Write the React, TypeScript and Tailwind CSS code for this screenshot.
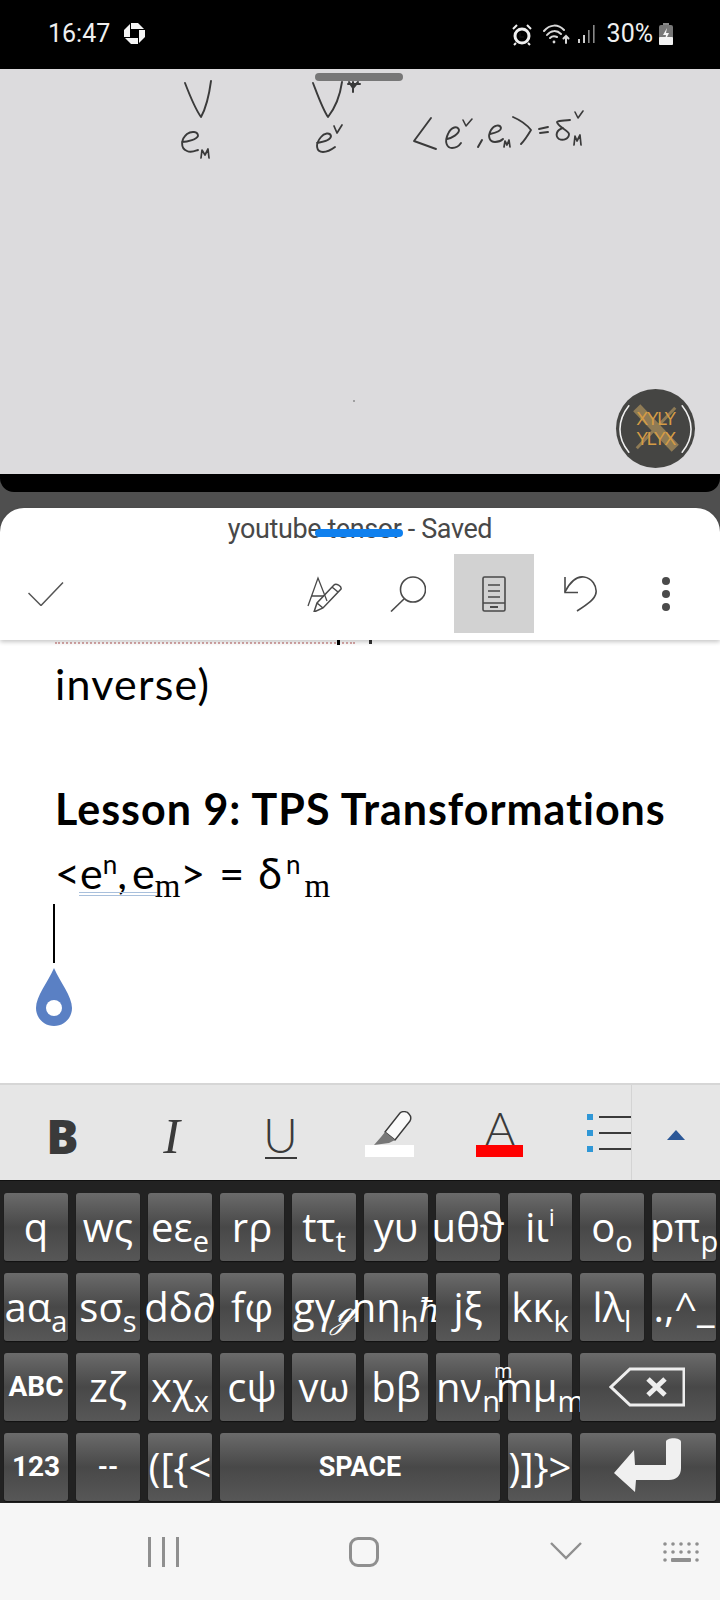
import React from 'react';

type KeyProps = { main: string; sub?: string; sup?: string; extra?: string; top?: string };

const Cap: React.FC<{ className?: string; children?: React.ReactNode }> = ({ className, children }) => (
  <div className={`relative h-[68px] rounded-[3px] bg-linear-to-b from-[#6b6b6b] via-[#484848] to-[#575757] shadow-[0_1px_1px_#111] flex justify-center items-center text-white ${className ?? ''}`}>
    {children}
  </div>
);

// letter key: text overflows the cap on purpose, as in the picture
const LetterKey: React.FC<KeyProps> = ({ main, sub, sup, extra, top }) => (
  <Cap>
    <span className="whitespace-nowrap text-[40px] leading-[68px] h-[68px] font-['Open_Sans','DejaVu_Sans',sans-serif]">
      {main}
      {sub && <span className="text-[29px] leading-none align-[-10px]">{sub}</span>}
      {sup && <span className="text-[24px] leading-none align-[16px]">{sup}</span>}
      {extra && <span className="font-['DejaVu_Serif',serif] italic font-light text-[34px] leading-none">{extra}</span>}
    </span>
    {top && <span className="absolute left-[-14px] top-[8px] text-[20px] leading-none font-['Open_Sans',sans-serif]">{top}</span>}
  </Cap>
);

const row1: KeyProps[] = [
  { main: 'q' },
  { main: 'wς' },
  { main: 'eε', sub: 'e' },
  { main: 'rρ' },
  { main: 'tτ', sub: 't' },
  { main: 'yυ' },
  { main: 'uθϑ' },
  { main: 'iι', sup: 'i' },
  { main: 'o', sub: 'o' },
  { main: 'pπ', sub: 'p' },
];

const row2: KeyProps[] = [
  { main: 'aα', sub: 'a' },
  { main: 'sσ', sub: 's' },
  { main: 'dδ∂' },
  { main: 'fφ' },
  { main: 'gγ', extra: 'ℊ' },
  { main: 'nη', sub: 'h', extra: 'ħ' },
  { main: 'jξ' },
  { main: 'kκ', sub: 'k' },
  { main: 'lλ', sub: 'l' },
  { main: '.,^_' },
];

const row3: KeyProps[] = [
  { main: 'zζ' },
  { main: 'xχ', sub: 'x' },
  { main: 'cψ' },
  { main: 'vω' },
  { main: 'bβ' },
  { main: 'nν', sub: 'n' },
  { main: 'mμ', sub: 'm', top: 'm' },
];

const Handwriting = () => (
  <svg viewBox="0 69 720 405" className="absolute inset-0 w-full h-full" fill="none" stroke="#3a3a3a" strokeWidth="1.9" strokeLinecap="round" strokeLinejoin="round">
    {/* first V and e_mu */}
    <path d="M185 83 C190 96 196 110 201 117 C206 108 209 96 211 81" />
    <path d="M182 142 C188 142 197 139 198 136 C198 131 191 131 187 134 C181 139 180 148 187 151 C191 153 195 151 198 150" />
    <path d="M201 158 L202 150 L205 155 L208 149 L209 158" strokeWidth="1.7" />
    {/* second V, star and e^nu */}
    <path d="M313 83 C318 96 323 110 328 117 C335 108 340 96 342 82" />
    <path d="M348 84 L360 84 M353 82 L353 92 M349 82 L353 88 L358 82" strokeWidth="2" />
    <path d="M317 143 C323 142 331 140 331 136 C330 132 324 133 321 137 C315 144 316 152 323 152 C327 152 331 150 335 147" />
    <path d="M334 126 L337 133 L342 125" strokeWidth="1.7" />
    {/* <e^nu, e_mu> = delta */}
    <path d="M431 118 L414 141 L436 149" />
    <path d="M447 139 C452 138 459 134 459 130 C458 125 451 127 448 134 C444 142 447 148 452 148 C456 148 459 146 461 143" />
    <path d="M463 120 L466 126 L472 119" strokeWidth="1.6" />
    <path d="M482 140 L478 147" strokeWidth="2" />
    <path d="M490 134 C495 133 501 131 501 128 C500 124 494 125 491 130 C487 137 490 142 495 142 C498 142 501 141 503 139" />
    <path d="M504 147 L505 141 L507 145 L509 140 L510 147" strokeWidth="1.7" />
    <path d="M513 117 C520 120 527 125 531 130 C528 135 525 140 521 144" />
    <path d="M539 129 L548 127 M540 133 L548 132" />
    <path d="M570 120 C565 121 560 120 557 122 C558 127 568 130 569 134 C569 139 563 141 559 139 C555 136 556 130 563 128" />
    <path d="M575 112 L578 118 L583 111" strokeWidth="1.6" />
    <path d="M574 145 L575 136 L577 141 L580 135 L581 145" strokeWidth="1.7" />
    <circle cx="354" cy="401" r="0.8" fill="#555" stroke="none" />
  </svg>
);

const Watermark = () => (
  <div className="absolute left-[616px] top-[320px] w-[79px] h-[79px] rounded-full bg-[#454543] overflow-hidden flex flex-col items-center justify-center">
    <svg viewBox="0 0 80 80" className="absolute inset-0" fill="none">
      <path d="M21 19 L60 60" stroke="#8f7b55" strokeWidth="10" />
      <path d="M60 19 L21 60" stroke="#8f7b55" strokeWidth="3" />
      <path d="M13 17 C1 32 1 50 13 64" stroke="#f0f0f0" strokeWidth="1.6" strokeLinecap="round" />
      <path d="M67 17 C79 32 79 50 67 64" stroke="#f0f0f0" strokeWidth="1.6" strokeLinecap="round" />
    </svg>
    <span className="relative font-['Liberation_Sans',sans-serif] text-[#d59c45] text-[18px] leading-[20px] tracking-[-1.5px]">XYLY</span>
    <span className="relative font-['Liberation_Sans',sans-serif] text-[#d59c45] text-[18px] leading-[20px] tracking-[-1.5px]">YLYX</span>
  </div>
);

const StatusBar = () => (
  <div className="h-[69px] bg-black text-[#f0f0f0] flex items-start pt-[20px] pl-[48px] font-['Roboto',sans-serif] text-[25px] leading-[28px]">
    <span>16:47</span>
    {/* chase style logo */}
    <svg viewBox="0 0 21 21" className="ml-[14px] mt-[3px] w-[21px] h-[21px]" fill="#f5f5f5">
      <path d="M7 0 H14 L20 6 H7 Z" />
      <path d="M7 0 H14 L20 6 H7 Z" transform="rotate(90 10.5 10.5)" />
      <path d="M7 0 H14 L20 6 H7 Z" transform="rotate(180 10.5 10.5)" />
      <path d="M7 0 H14 L20 6 H7 Z" transform="rotate(270 10.5 10.5)" />
    </svg>
    <div className="ml-auto flex items-center pr-[47px]">
      {/* alarm */}
      <svg viewBox="0 0 22 22" className="w-[22px] h-[22px] mt-[1px]" fill="none" stroke="#f0f0f0">
        <circle cx="11" cy="12" r="7" strokeWidth="3" />
        <path d="M9 9 V13 H13" stroke="#111" strokeWidth="1.4" />
        <path d="M2 5 L6 1 M20 5 L16 1 M5 19 L3 21 M17 19 L19 21" strokeWidth="2" />
      </svg>
      {/* wifi */}
      <svg viewBox="0 0 28 22" className="ml-[10px] w-[28px] h-[22px]" fill="none" stroke="#d8d8d8" strokeWidth="2" strokeLinecap="round">
        <path d="M1 8 C7 1 15 1 21 7" />
        <path d="M4 12 C8 7 14 7 18 11" />
        <path d="M7 15 C9 13 12 13 14 14" />
        <circle cx="11" cy="19" r="1.4" fill="#d8d8d8" stroke="none" />
        <path d="M23 20 V13 M20.5 15.5 L23 13 L25.5 15.5" />
      </svg>
      {/* signal */}
      <svg viewBox="0 0 18 18" className="ml-[7px] w-[18px] h-[18px]" fill="#cfcfcf">
        <rect x="0" y="14" width="2" height="4" />
        <rect x="5" y="10" width="2" height="8" />
        <rect x="10" y="5" width="1.6" height="13" fill="#888" />
        <rect x="15" y="0" width="1.6" height="18" fill="#888" />
      </svg>
      <span className="ml-[11px]">30%</span>
      {/* battery */}
      <svg viewBox="0 0 14 22" className="ml-[6px] w-[14px] h-[22px]">
        <rect x="4" y="0" width="6" height="3" fill="#888" />
        <rect x="0" y="2" width="14" height="20" rx="2" fill="#777" />
        <rect x="0" y="14" width="14" height="8" rx="1" fill="#f2f2f2" />
        <path d="M8 5 L4 12 H7 L6 18 L10 10 H7 Z" fill="#f5f5f5" />
      </svg>
    </div>
  </div>
);

const SheetHeader = () => (
  <div className="h-[132px] shadow-[0_2px_4px_rgba(0,0,0,0.22)] relative z-10 bg-white rounded-t-[24px]">
    <div className="h-[46px] pb-[4px] flex items-center justify-center text-[#484848] text-[27px] font-['Roboto',sans-serif] tracking-[-0.4px]">
      youtube tensor - Saved
    </div>
    <div className="h-[86px] flex justify-end pr-[11px] relative">
      <svg viewBox="0 0 36 24" className="absolute left-[28px] top-[28px] w-[36px] h-[24px]" fill="none" stroke="#555" strokeWidth="1.5">
        <path d="M0.5 11 L13 23.5 L35 0.5" />
      </svg>
      <div className="w-[86px] h-[79px] flex items-center justify-center">
        <svg viewBox="0 0 36 36" className="w-[36px] h-[36px] ml-[6px]" fill="none" stroke="#4a4a4a" strokeWidth="1.3">
          <path d="M1 30 L11 2 L20 25 M5 20 H17" />
          <path d="M7 36 L10 27 L27 9 C29 7 35 10 34 13 L16 32 Z M25 11 L31 16 M10 27 L16 32" strokeWidth="1.5" />
        </svg>
      </div>
      <div className="w-[86px] h-[79px] flex items-center justify-center">
        <svg viewBox="0 0 36 36" className="w-[36px] h-[36px]" fill="none" stroke="#4a4a4a" strokeWidth="1.6">
          <circle cx="23" cy="13.5" r="12.5" />
          <path d="M14 23 L1 35.5" />
        </svg>
      </div>
      <div className="w-[86px] h-[79px] flex items-center justify-center">
        <div className="w-[80px] h-[79px] bg-[#d2d2d2] flex items-center justify-center">
          <svg viewBox="0 0 24 36" className="w-[24px] h-[36px]" fill="none" stroke="#4a4a4a" strokeWidth="1.6">
            <rect x="1" y="1" width="22" height="34" rx="1.5" />
            <path d="M6 9 H18 M6 15 H18 M6 21 H18 M1 27 H23" />
            <path d="M8 31 H16" strokeWidth="2" />
          </svg>
        </div>
      </div>
      <div className="w-[86px] h-[79px] flex items-center justify-center">
        <svg viewBox="0 0 33 36" className="w-[33px] h-[36px]" fill="none" stroke="#4a4a4a" strokeWidth="1.6">
          <path d="M1 1 V16.5 H14" />
          <path d="M1 16 C6 6 13 0 20 1 C28 2 33 10 32 17 C31 23 24 28 13 35" />
        </svg>
      </div>
      <div className="w-[86px] h-[79px] flex flex-col items-center justify-center gap-[5px]">
        <span className="w-[8px] h-[8px] rounded-full bg-[#4a4a4a]" />
        <span className="w-[8px] h-[8px] rounded-full bg-[#4a4a4a]" />
        <span className="w-[8px] h-[8px] rounded-full bg-[#4a4a4a]" />
      </div>
    </div>
  </div>
);

const DocBody = () => (
  <div className="relative h-[443px] bg-white pl-[55px] text-black font-['Lato',sans-serif] overflow-hidden">
    {/* spell check squiggle from the line cut off above */}
    <div className="h-[4px] w-[300px] border-b-2 border-dotted border-[#d9a9a9]" />
    <div className="absolute left-[337px] top-0 w-[3px] h-[5px] bg-black" />
    <div className="absolute left-[369px] top-0 w-[3px] h-[4px] bg-[#333]" />
    <div className="mt-[12px] text-[43px] leading-[56px] tracking-[1.2px]">inverse)</div>
    <div className="mt-[69px] text-[43px] leading-[56px] font-bold tracking-[1px] whitespace-nowrap">Lesson 9: TPS Transformations</div>
    <div className="mt-[8px] text-[43px] leading-[56px] whitespace-nowrap relative">
      <span>&lt;e</span>
      <span className="text-[26px] leading-none align-[15px]">n</span>
      <span>,</span>
      <span className="ml-[5px]">e</span>
      <span className="font-['Liberation_Serif',serif] text-[33px] leading-none align-[-8px]">m</span>
      <span>&gt;</span>
      <span className="ml-[14px]">=</span>
      <span className="ml-[14px]">δ</span>
      <span className="text-[26px] leading-none align-[15px] ml-[4px]">n</span>
      <span className="font-['Liberation_Serif',serif] text-[33px] leading-none align-[-8px] ml-[4px]">m</span>
      <div className="absolute left-[24px] top-[47px] w-[78px] h-[4px] border-y border-[#a9c0dc]" />
    </div>
    {/* caret and handle */}
    <div className="absolute left-[53px] top-[264px] w-[2px] h-[59px] bg-black" />
    <svg viewBox="0 0 36 58" className="absolute left-[36px] top-[328px] w-[36px] h-[58px]">
      <path d="M18 0 C24 14 36 28 36 40 C36 50 28 58 18 58 C8 58 0 50 0 40 C0 28 12 14 18 0 Z" fill="#5a80c4" />
      <circle cx="18" cy="40" r="8" fill="#fff" />
    </svg>
  </div>
);

const FormatBar = () => (
  <div className="h-[97px] bg-[#e6e6e6] border-t-2 border-[#d6d6d6] flex items-center pl-[8px] text-[#3a3a3a]">
    <div className="w-[109px] h-full flex items-center justify-center">
      <span className="font-['Open_Sans',sans-serif] font-extrabold text-[48px] leading-none mt-[6px]">B</span>
    </div>
    <div className="w-[109px] h-full flex items-center justify-center">
      <span className="font-['Liberation_Serif',serif] italic text-[50px] leading-none mt-[6px]">I</span>
    </div>
    <div className="w-[109px] h-full flex flex-col items-center justify-center">
      <span className="font-['Lato',sans-serif] font-light text-[48px] leading-[40px] mt-[8px]">U</span>
      <span className="w-[32px] h-[2px] bg-[#3a3a3a] mt-[2px]" />
    </div>
    <div className="w-[109px] h-full flex flex-col items-center justify-center">
      <svg viewBox="0 0 38 34" className="w-[38px] h-[34px] mt-[2px] ml-[6px]" fill="#fafafa" stroke="#3a3a3a" strokeWidth="1.4" strokeLinejoin="round">
        <path d="M11 21 L26 2 C28 0 33 0 35 3 C37 5 37 8 36 10 L21 29 Z" />
        <path d="M11 21 L21 29 L15 32 L0 34 L7 26 Z" fill="#777" stroke="none" />
      </svg>
      <span className="w-[49px] h-[12px] bg-white" />
    </div>
    <div className="w-[109px] h-full flex flex-col items-center justify-center">
      <span className="font-['Lato',sans-serif] font-light text-[46px] leading-[34px] mt-[2px] ml-[3px]">A</span>
      <span className="w-[47px] h-[12px] bg-[#ff0000] ml-[1px]" />
    </div>
    <div className="ml-[34px] w-[45px] h-full flex flex-col justify-center gap-[10px] border-r border-[#d4d4d4]">
      <div className="flex items-center gap-[6px]">
        <span className="w-[6px] h-[6px] bg-[#2f97d6]" />
        <span className="flex-1 h-[2px] bg-[#3a3a3a]" />
      </div>
      <div className="flex items-center gap-[6px]">
        <span className="w-[6px] h-[6px] bg-[#2f97d6]" />
        <span className="flex-1 h-[2px] bg-[#3a3a3a]" />
      </div>
      <div className="flex items-center gap-[6px]">
        <span className="w-[6px] h-[6px] bg-[#2f97d6]" />
        <span className="flex-1 h-[2px] bg-[#3a3a3a]" />
      </div>
    </div>
    <div className="flex-1 flex justify-center">
      <div className="w-0 h-0 border-x-[9px] border-x-transparent border-b-[10px] border-b-[#2b5797] mt-[4px]" />
    </div>
  </div>
);

const Keyboard = () => (
  <div className="h-[323px] bg-[#222] px-[4px] pt-[12px] grid grid-cols-10 gap-x-[8px] gap-y-[12px] content-start font-['Roboto',sans-serif] border-t border-[#111]">
    {row1.map((k, i) => <LetterKey key={i} {...k} />)}
    {row2.map((k, i) => <LetterKey key={i} {...k} />)}
    <Cap><span className="font-bold text-[28px]">ABC</span></Cap>
    {row3.map((k, i) => <LetterKey key={i} {...k} />)}
    <Cap className="col-span-2">
      <svg viewBox="0 0 76 40" className="w-[76px] h-[40px] -ml-[2px]" fill="none" stroke="#eee">
        <path d="M75 2 H21 L2 20 L21 38 H75 Z" strokeWidth="3" />
        <path d="M39 12 L56 28 M56 12 L39 28" strokeWidth="5" />
      </svg>
    </Cap>
    <Cap><span className="font-bold text-[28px]">123</span></Cap>
    <Cap><span className="font-bold text-[26px]">--</span></Cap>
    <Cap><span className="whitespace-nowrap font-['Open_Sans','DejaVu_Sans',sans-serif] text-[40px]">{'([{<'}</span></Cap>
    <Cap className="col-span-4"><span className="font-bold text-[27px]">SPACE</span></Cap>
    <Cap><span className="whitespace-nowrap font-['Open_Sans','DejaVu_Sans',sans-serif] text-[40px]">{')]}>'}</span></Cap>
    <Cap className="col-span-2">
      <svg viewBox="0 0 68 54" className="w-[68px] h-[54px] mt-[-4px]" fill="#f0f0f0">
        <path d="M0 35 L20 12 L21 27 L52 27 L52 4 C52 -1 67 -1 67 4 L67 30 C67 38 62 42 55 42 L22 42 L21 54 Z" />
      </svg>
    </Cap>
  </div>
);

const NavBar = () => (
  <div className="h-[97px] bg-[#f6f6f6] relative">
    <div className="absolute left-[148px] top-[34px] flex gap-[11px]">
      <span className="w-[3px] h-[30px] bg-[#8f8f8f]" />
      <span className="w-[3px] h-[30px] bg-[#8f8f8f]" />
      <span className="w-[3px] h-[30px] bg-[#8f8f8f]" />
    </div>
    <div className="absolute left-[349px] top-[34px] w-[30px] h-[30px] rounded-[9px] border-[3px] border-[#8f8f8f]" />
    <svg viewBox="0 0 32 18" className="absolute left-[550px] top-[39px] w-[32px] h-[18px]" fill="none" stroke="#8f8f8f" strokeWidth="2.4">
      <path d="M1 1 L16 16 L31 1" />
    </svg>
    <svg viewBox="0 0 36 22" className="absolute left-[663px] top-[38px] w-[36px] h-[22px]" fill="#8f8f8f">
      <circle cx="2" cy="3" r="1.8" /><circle cx="10" cy="3" r="1.8" /><circle cx="18" cy="3" r="1.8" /><circle cx="26" cy="3" r="1.8" /><circle cx="34" cy="3" r="1.8" />
      <circle cx="2" cy="11" r="1.8" /><circle cx="10" cy="11" r="1.8" /><circle cx="18" cy="11" r="1.8" /><circle cx="26" cy="11" r="1.8" /><circle cx="34" cy="11" r="1.8" />
      <circle cx="2" cy="19" r="1.8" /><rect x="8" y="17" width="20" height="4" rx="1" /><circle cx="34" cy="19" r="1.8" />
    </svg>
  </div>
);

const App: React.FC = () => {
  return (
    <div className="w-[720px] h-[1600px] relative overflow-hidden bg-[#4f4f4f]">
      <div className="rounded-b-[14px] bg-black overflow-hidden">
        <StatusBar />
        <div className="relative h-[405px] bg-[#dcdbdd]">
          <Handwriting />
          <Watermark />
        </div>
        <div className="h-[18px]" />
      </div>
      <div className="h-[16px]" />
      <SheetHeader />
      <DocBody />
      <FormatBar />
      <Keyboard />
      <NavBar />
      {/* split screen handles sit on top of everything */}
      <div className="absolute left-[315px] top-[73px] w-[88px] h-[8px] rounded-full bg-[#777]" />
      <div className="absolute left-[315px] top-[529px] w-[88px] h-[8px] rounded-full bg-[#0f80ee] z-20" />
    </div>
  );
};

export default App;
